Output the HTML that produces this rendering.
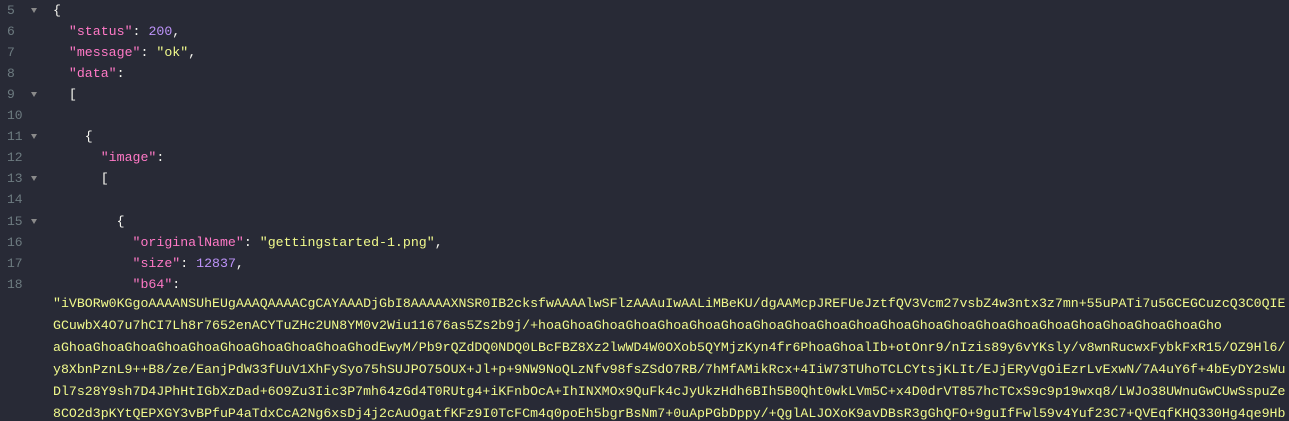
<!DOCTYPE html>
<html><head><meta charset="utf-8"><style>
html,body{margin:0;padding:0;background:#282a36;width:1289px;height:421px;overflow:hidden}
body{font-family:"Liberation Mono",monospace;font-size:13.25px;color:#f8f8f2;position:relative}
.r{position:absolute;left:0;height:21px;line-height:21px;white-space:pre;width:1289px;overflow:hidden}
.n{position:absolute;left:7px;color:#6d7b80;font-size:13px}
.a{position:absolute;left:31px;top:8px;width:0;height:0;border-left:3.5px solid transparent;border-right:3.5px solid transparent;border-top:5px solid #8a8a8a}
.c{position:absolute;left:53px}
.k{color:#ff79c6}.s{color:#f1fa8c}.m{color:#bd93f9}
</style></head><body>
<div class="r" style="top:0"><span class="n">5</span><span class="a"></span><span class="c">{</span></div>
<div class="r" style="top:21px"><span class="n">6</span><span class="c">  <span class="k">"status"</span>: <span class="m">200</span>,</span></div>
<div class="r" style="top:42px"><span class="n">7</span><span class="c">  <span class="k">"message"</span>: <span class="s">"ok"</span>,</span></div>
<div class="r" style="top:63px"><span class="n">8</span><span class="c">  <span class="k">"data"</span>:</span></div>
<div class="r" style="top:84px"><span class="n">9</span><span class="a"></span><span class="c">  [</span></div>
<div class="r" style="top:105px"><span class="n">10</span></div>
<div class="r" style="top:126px"><span class="n">11</span><span class="a"></span><span class="c">    {</span></div>
<div class="r" style="top:147px"><span class="n">12</span><span class="c">      <span class="k">"image"</span>:</span></div>
<div class="r" style="top:168px"><span class="n">13</span><span class="a"></span><span class="c">      [</span></div>
<div class="r" style="top:189px"><span class="n">14</span></div>
<div class="r" style="top:211px"><span class="n">15</span><span class="a"></span><span class="c">        {</span></div>
<div class="r" style="top:232px"><span class="n">16</span><span class="c">          <span class="k">"originalName"</span>: <span class="s">"gettingstarted-1.png"</span>,</span></div>
<div class="r" style="top:253px"><span class="n">17</span><span class="c">          <span class="k">"size"</span>: <span class="m">12837</span>,</span></div>
<div class="r" style="top:274px"><span class="n">18</span><span class="c">          <span class="k">"b64"</span>:</span></div>
<div class="r s" style="top:293px"><span class="c">"iVBORw0KGgoAAAANSUhEUgAAAQAAAACgCAYAAADjGbI8AAAAAXNSR0IB2cksfwAAAAlwSFlzAAAuIwAALiMBeKU/dgAAMcpJREFUeJztfQV3Vcm27vsbZ4w3ntx3z7mn+55uPATi7u5GCEGCuzcQ3C0QIE</span></div>
<div class="r s" style="top:315px"><span class="c">GCuwbX4O7u7hCI7Lh8r7652enACYTuZHc2UN8YM0v2Wiu11676as5Zs2b9j/+hoaGhoaGhoaGhoaGhoaGhoaGhoaGhoaGhoaGhoaGhoaGhoaGhoaGhoaGhoaGhoaGhoaGhoaGhoaGhoaGhoaGho</span></div>
<div class="r s" style="top:337px"><span class="c">aGhoaGhoaGhoaGhoaGhoaGhoaGhoaGhoaGhoaGhodEwyM/Pb9rQZdDQ0NDQ0LBcFBZ8Xz2lwWD4W0OXob5QYMjzKyn4fr6PhoaGhoalIb+otOnr9/nIzis89y6vYKsly/v8wnRucwxFybkFxR15/OZ9Hl6/</span></div>
<div class="r s" style="top:359px"><span class="c">y8XbnPznL9++B8/ze/EanjPdW33fUuV1XhFySyo75hSUJPO75OUX+Jl+p+9NW9NoQLzNfv98fsZSdO7RB/7hMfAMikRcx+4IiW73TUhoTCLCYtsjKLIt/EJjERyVgOiEzrLvExwN/7A4uY6f+4bEyDY2sWu</span></div>
<div class="r s" style="top:381px"><span class="c">Dl7s28Y9sh7D4JPhHtIGbXzDad+6O9Zu3Iic3P7mh64zGd4T0RUtg4+iKFnbOcA+IhINXMOx9QuFk4cJyUkzHdh6BIh5B0Qht0wkLVm5C+x4D0drVT857hcTCxS9c9p19wxq8/LWJo38UWnuGwCUwSspuZe</span></div>
<div class="r s" style="top:403px"><span class="c">8CO2d3pKYtQEPXGY3vBPfuP4aTdxCcA2Ng6xsDj4j2cAuOgatfKFz9I0TcFCm4q0poEh5bgrBsNm7+0uApPGbDppy/+QglALJOXoK9avDBsR3gGhQFO+9guIfFwl59v4Yuf23C7+QVEqfKHQ330Hg4qe9Hb</span></div>
</body></html>
